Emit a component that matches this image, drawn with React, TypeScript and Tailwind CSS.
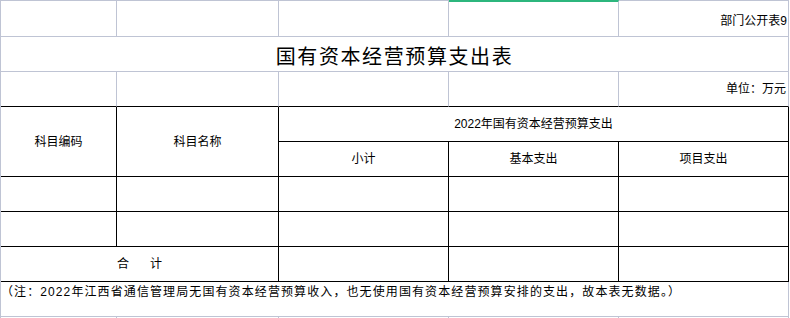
import React from "react";

const grid = "border-[#bfc4d4]";
const line = "border-black";

const App = () => {
  return (
    <div className="w-[790px] h-[318px] overflow-hidden bg-white text-black font-['Liberation_Sans','Noto_Sans_CJK_SC',sans-serif] text-[12px] leading-4">
      <div className={`grid w-fit grid-cols-[116px_162px_170px_170px_170px] grid-rows-[37px_35px_35px_35px_35px_35px_35px_35px_35px_2px] border-l ${grid}`}>
        {/* row 1 */}
        <div className={`border-t border-r border-b ${grid}`} />
        <div className={`border-t border-r border-b ${grid}`} />
        <div className={`border-t border-r border-b ${grid}`} />
        <div className={`border-t-2 border-t-[#2cb67d] border-r border-b ${grid}`} />
        <div className={`flex items-center justify-end pt-[4px] pr-[1px] border-t border-r border-b ${grid}`}>
          部门公开表9
        </div>

        {/* title */}
        <div className={`col-span-5 flex items-center justify-center pt-[5px] border-r border-b ${grid}`}>
          <span className="text-[20px] leading-6 tracking-[1.6px]">国有资本经营预算支出表</span>
        </div>

        {/* unit row */}
        <div className={`border-r ${grid} border-b border-b-black`} />
        <div className={`border-r ${grid} border-b border-b-black`} />
        <div className={`border-r ${grid} border-b border-b-black`} />
        <div className={`border-r ${grid} border-b border-b-black`} />
        <div className={`flex items-center justify-end pr-[2px] border-r ${grid} border-b border-b-black`}>
          单位：万元
        </div>

        {/* header */}
        <div className={`row-span-2 flex items-center justify-center border-r border-b ${line}`}>科目编码</div>
        <div className={`row-span-2 flex items-center justify-center border-r border-b ${line}`}>科目名称</div>
        <div className={`col-span-3 flex items-center justify-center border-r border-b ${line}`}>
          2022年国有资本经营预算支出
        </div>
        <div className={`flex items-center justify-center border-r border-b ${line}`}>小计</div>
        <div className={`flex items-center justify-center border-r border-b ${line}`}>基本支出</div>
        <div className={`flex items-center justify-center border-r border-b ${line}`}>项目支出</div>

        {/* empty body rows */}
        {[0, 1].map((r) =>
          [0, 1, 2, 3, 4].map((c) => (
            <div key={`${r}-${c}`} className={`border-r border-b ${line}`} />
          ))
        )}

        {/* total */}
        <div className={`col-span-2 flex items-center justify-center gap-[21px] border-r border-b ${line}`}>
          <span>合</span>
          <span>计</span>
        </div>
        <div className={`border-r border-b ${line}`} />
        <div className={`border-r border-b ${line}`} />
        <div className={`border-r border-b ${line}`} />

        {/* note */}
        <div className={`col-span-5 flex items-start pt-[2px] tracking-[1.1px] border-r border-b ${grid}`}>
          （注：2022年江西省通信管理局无国有资本经营预算收入，也无使用国有资本经营预算安排的支出，故本表无数据。）
        </div>

        {/* next sheet row, cut off */}
        <div className={`border-r ${grid}`} />
        <div className={`border-r ${grid}`} />
        <div className={`border-r ${grid}`} />
        <div className={`border-r ${grid}`} />
        <div className={`border-r ${grid}`} />
      </div>
    </div>
  );
};

export default App;
